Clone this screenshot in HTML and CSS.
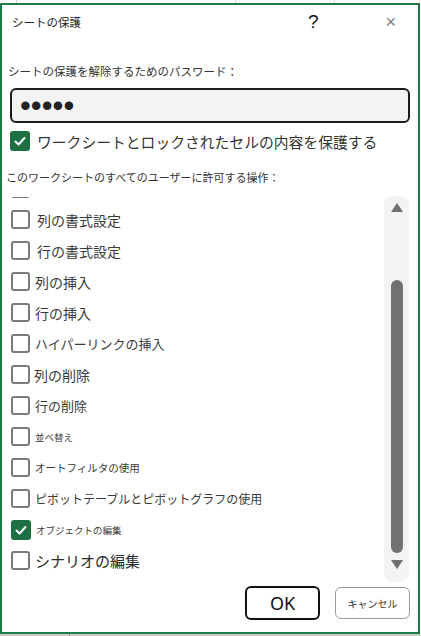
FILE: index.html
```html
<!DOCTYPE html>
<html lang="ja">
<head>
  <meta charset="UTF-8">
  <meta name="viewport" content="width=device-width, initial-scale=1">
  <title>シートの保護</title>
  <link rel="stylesheet" href="styles.css">
</head>
<body>
  <div class="sheet-edge top"></div>

  <div class="dialog">
    <header class="dialog-header">
      <span class="dialog-title">シートの保護</span>
      <span class="help">?</span>
      <span class="close">×</span>
    </header>

    <label class="field-label">シートの保護を解除するためのパスワード：</label>
    <div class="password">•••••</div>

    <label class="check-row main">
      <span class="box checked">
        <svg viewBox="0 0 20 20" width="20" height="20"><polyline points="5.5,10.5 8.5,13.5 14.5,7" fill="none" stroke="#fff" stroke-width="2" stroke-linecap="round" stroke-linejoin="round"/></svg>
      </span>
      <span>ワークシートとロックされたセルの内容を保護する</span>
    </label>

    <p class="list-label">このワークシートのすべてのユーザーに許可する操作：</p>

    <!-- permission list, scrolled a little past the first item -->
    <div class="perm-area">
      <div class="perm-viewport">
        <ul class="perm-list">
          <li class="perm"><span class="box"></span><span class="t14 shift-r">セルの書式設定</span></li>
          <li class="perm"><span class="box"></span><span class="t14 shift-r">列の書式設定</span></li>
          <li class="perm"><span class="box"></span><span class="t14 shift-r">行の書式設定</span></li>
          <li class="perm"><span class="box"></span><span class="t14">列の挿入</span></li>
          <li class="perm"><span class="box"></span><span class="t14">行の挿入</span></li>
          <li class="perm"><span class="box"></span><span class="t13">ハイパーリンクの挿入</span></li>
          <li class="perm"><span class="box"></span><span class="t14 shift-l">列の削除</span></li>
          <li class="perm"><span class="box"></span><span class="t13">行の削除</span></li>
          <li class="perm"><span class="box"></span><span class="t10">並べ替え</span></li>
          <li class="perm"><span class="box"></span><span class="t11">オートフィルタの使用</span></li>
          <li class="perm"><span class="box"></span><span class="t12">ピボットテーブルとピボットグラフの使用</span></li>
          <li class="perm">
            <span class="box checked">
              <svg viewBox="0 0 20 20" width="20" height="20"><polyline points="5.5,10.5 8.5,13.5 14.5,7" fill="none" stroke="#fff" stroke-width="2" stroke-linecap="round" stroke-linejoin="round"/></svg>
            </span>
            <span class="t10">オブジェクトの編集</span>
          </li>
          <li class="perm"><span class="box"></span><span class="t15">シナリオの編集</span></li>
        </ul>
      </div>
      <div class="scrollbar">
        <span class="arrow up"></span>
        <span class="thumb"></span>
        <span class="arrow down"></span>
      </div>
    </div>

    <div class="actions">
      <button class="btn ok">OK</button>
      <button class="btn cancel">キャンセル</button>
    </div>
  </div>

  <div class="sheet-edge bottom"></div>
</body>
</html>
```

FILE: styles.css
```css
:root {
  --green: #1f7a45;
  --green-box: #1d7042;
  --text: #333;
  --box-border: #7a7a7a;
}
* { box-sizing:border-box; }
body {
  margin:0; background:#fff; color:var(--text);
  font-family:"Noto Sans CJK JP", "Noto Sans", sans-serif;
}
.sheet-edge.top {
  height:3px;
  background:linear-gradient(to right,
    transparent 16px, #d6d6d6 16px, #d6d6d6 17px, transparent 17px,
    transparent 235px, #d6d6d6 235px, #d6d6d6 236px, transparent 236px,
    transparent 334px, #d6d6d6 334px, #d6d6d6 335px, transparent 335px);
}
.sheet-edge.bottom {
  height:2px;
  background:linear-gradient(to right, #cbcbcb 69px, #9c9c9c 69px, #9c9c9c 70px, #cbcbcb 70px);
}
.dialog {
  width:420px; height:631px;
  border:2px solid var(--green);
  display:flex; flex-direction:column;
}
.dialog-header {
  height:34px; display:flex; align-items:center; padding-left:10px;
}
.dialog-title { flex:1; font-size:11.5px; color:#222; }
.help {
  font-family:"Liberation Sans", Arial, sans-serif;
  font-size:19px; color:#111; margin-right:67px;
}
.close {
  font-family:"Liberation Sans", Arial, sans-serif;
  font-size:18px; color:#7a7a7a; margin-right:22px;
}
.field-label {
  display:block; margin:24px 0 0 6px;
  font-size:11.5px; line-height:16px;
}
.password {
  margin:9px 0 0 8px; width:400px; height:35px;
  border:2px solid #1b1b1b; border-radius:6px; background:#f3f3f3;
  padding-left:8px; display:flex; align-items:center;
  font-family:"Liberation Sans", Arial, sans-serif;
  font-size:31px; line-height:31px; color:#222;
}
.check-row.main {
  margin:8px 0 0 8px; height:20px;
  display:flex; align-items:center; gap:7px;
  font-size:14.8px;
}
.box {
  flex:none; width:19px; height:19px;
  border:2px solid var(--box-border); border-radius:3px; background:#fff;
  display:flex; align-items:center; justify-content:center;
}
.box.checked { width:20px; height:20px; border:none; background:var(--green-box); }
.list-label {
  margin:18px 0 0 4px; font-size:11px; line-height:16px;
}
.perm-area {
  margin:12px 9px 0 0; height:385px;
  display:flex;
}
.perm-viewport { flex:1; overflow:hidden; }
.perm-list { list-style:none; margin:-24px 0 0; padding:0 0 0 9px; }
.perm { height:31px; display:flex; align-items:center; gap:5px; color:#3a3a3a; }
.t10 { font-size:9.5px; }
.t11 { font-size:10.5px; }
.t12 { font-size:12px; }
.t13 { font-size:13px; }
.t14 { font-size:14px; }
.t15 { font-size:15px; color:#2a2a2a; }
.shift-r { margin-left:2px; }
.shift-l { margin-left:-1px; }
.scrollbar {
  flex:none; width:25px; height:386px; margin-top:-1px;
  background:#f3f3f3; border-radius:9px;
  display:flex; flex-direction:column; align-items:center;
  padding-top:7px;
}
.arrow { width:0; height:0; border-left:6px solid transparent; border-right:6px solid transparent; }
.arrow.up { border-bottom:9px solid #707070; }
.arrow.down { border-top:9px solid #707070; margin-top:7px; }
.thumb {
  width:12px; height:273px; margin-top:68px;
  background:#717171; border-radius:6px;
}
.actions {
  margin-top:4px; padding-right:8px;
  display:flex; justify-content:flex-end; align-items:center; gap:15px;
}
.btn { background:#fff; cursor:pointer; padding:0; font-family:inherit; }
.btn.ok {
  width:75px; height:34px; border:2px solid #111; border-radius:6px;
  font-family:"Noto Sans", sans-serif; font-size:18px; color:#111;
}
.btn.cancel {
  width:75px; height:32px; border:1px solid #9a9a9a; border-radius:6px;
  font-size:10px; color:#333;
}
```
